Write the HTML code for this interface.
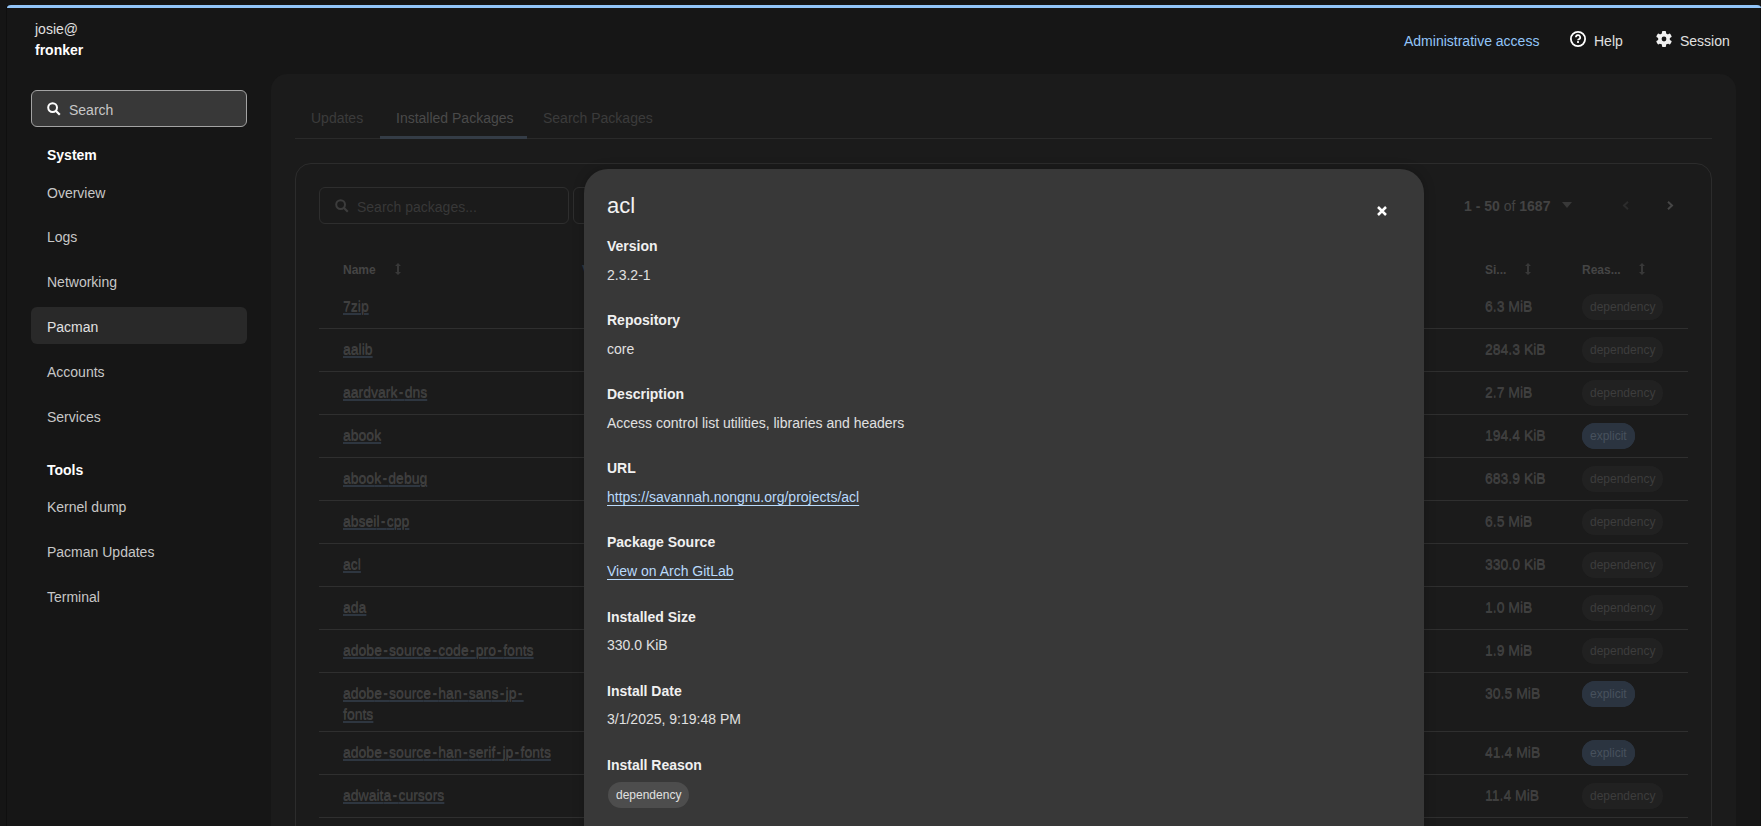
<!DOCTYPE html>
<html><head><meta charset="utf-8">
<style>
*{box-sizing:border-box;margin:0;padding:0}
html,body{width:1761px;height:826px;overflow:hidden;background:#151515}
body{font-family:"Liberation Sans",sans-serif;font-size:14px;color:#e0e0e0;position:relative}
.a{position:absolute;white-space:nowrap;line-height:1}
#frame{position:absolute;left:6px;top:5px;right:0;bottom:0;background:#161616;border-left:1px solid #0f0f0f;border-right:1px solid #101010;border-top-left-radius:4px;border-top-right-radius:4px;overflow:hidden}
#topline{position:absolute;left:7px;top:5px;right:0;height:3px;background:#92c5f9;border-top-left-radius:4px 3px;border-top-right-radius:4px 3px}
.nav{color:#c7c7c7}
.navh{color:#fff;font-weight:bold}
#content{position:absolute;left:271px;top:74px;width:1465px;height:780px;background:#1b1b1b;border-top-left-radius:16px;border-top-right-radius:16px}
.tab{color:#3b3b3b}
#card{position:absolute;left:295px;top:163px;width:1417px;height:700px;border:1px solid #2c2c2c;border-radius:16px}
.inp{position:absolute;border:1px solid #2e2e2e;border-radius:6px}
.th{color:#454545;font-weight:bold;font-size:12px}
.nm{color:#3f3f3f;text-decoration:underline;text-decoration-color:#2e3640;text-underline-offset:2px;text-decoration-thickness:1px}
.sep{position:absolute;left:319px;width:1369px;height:1px;background:#2f2f2f}
.sz{color:#3f3f3f}
.chip{position:absolute;left:1582px;height:26px;border-radius:13px;background:#212121;color:#3d3d3d;font-size:12px;line-height:26px;padding:0 8px;white-space:nowrap}
.chip.ex{background:#2b3440;color:#47515d}
#modal{position:absolute;left:584px;top:169px;width:840px;height:720px;background:#383838;border-radius:24px;box-shadow:0 0 12px rgba(0,0,0,.22)}
.ml{color:#f0f0f0;font-weight:bold}
.mv{color:#e0e0e0}
.ma{color:#b9dafc;text-decoration:underline;text-underline-offset:3px;text-decoration-thickness:1px}
svg{position:absolute;overflow:visible}
</style></head><body>
<div id="frame"></div>
<div id="topline"></div>

<!-- header -->
<div class="a" style="left:35px;top:22px;color:#e0e0e0">josie@</div>
<div class="a" style="left:35px;top:43px;color:#fff;font-weight:bold">fronker</div>
<div class="a" style="left:1404px;top:34px;color:#92c5f9">Administrative access</div>
<svg style="left:1570px;top:31px" width="16" height="16" viewBox="0 0 16 16"><circle cx="8" cy="8" r="7.1" fill="none" stroke="#fff" stroke-width="1.8"/><path d="M5.9 6.3a2.15 2.15 0 1 1 3 1.9c-.55.3-.9.5-.9 1.1" fill="none" stroke="#fff" stroke-width="1.7"/><rect x="7.05" y="10.1" width="1.9" height="1.8" fill="#fff"/></svg>
<div class="a" style="left:1594px;top:34px;color:#e0e0e0">Help</div>
<svg style="left:1656px;top:31px" width="16" height="16" viewBox="-8 -8 16 16"><g fill="#f0f0f0"><circle r="5.9"/><rect x="-2.05" y="-8" width="4.1" height="16" rx="0.9"/><rect x="-2.05" y="-8" width="4.1" height="16" rx="0.9" transform="rotate(60)"/><rect x="-2.05" y="-8" width="4.1" height="16" rx="0.9" transform="rotate(120)"/></g><circle r="2.4" fill="#161616"/></svg>
<div class="a" style="left:1680px;top:34px;color:#e0e0e0">Session</div>

<!-- sidebar search -->
<div style="position:absolute;left:31px;top:90px;width:216px;height:37px;border:1px solid #a3a3a3;border-radius:6px;background:#383838"></div>
<svg style="left:47px;top:102px" width="14" height="14" viewBox="0 0 14 14"><circle cx="5.6" cy="5.6" r="4.4" fill="none" stroke="#fff" stroke-width="2"/><path d="M8.8 8.8l4 4" stroke="#fff" stroke-width="2.2"/></svg>
<div class="a" style="left:69px;top:103px;color:#c7c7c7">Search</div>

<div class="a navh" style="left:47px;top:148px">System</div>
<div class="a nav" style="left:47px;top:186px">Overview</div>
<div class="a nav" style="left:47px;top:230px">Logs</div>
<div class="a nav" style="left:47px;top:275px">Networking</div>
<div style="position:absolute;left:31px;top:307px;width:216px;height:37px;border-radius:6px;background:#292929"></div>
<div class="a nav" style="left:47px;top:320px;color:#e0e0e0">Pacman</div>
<div class="a nav" style="left:47px;top:365px">Accounts</div>
<div class="a nav" style="left:47px;top:410px">Services</div>
<div class="a navh" style="left:47px;top:463px">Tools</div>
<div class="a nav" style="left:47px;top:500px">Kernel dump</div>
<div class="a nav" style="left:47px;top:545px">Pacman Updates</div>
<div class="a nav" style="left:47px;top:590px">Terminal</div>

<!-- content -->
<div id="content"></div>
<div class="a tab" style="left:311px;top:111px">Updates</div>
<div class="a tab" style="left:396px;top:111px;color:#4a4a4a">Installed Packages</div>
<div class="a tab" style="left:543px;top:111px">Search Packages</div>
<div style="position:absolute;left:295px;top:138px;width:1417px;height:1px;background:#2a2a2a"></div>
<div style="position:absolute;left:380px;top:136px;width:147px;height:3px;background:#343c46"></div>

<div id="card"></div>
<div class="inp" style="left:319px;top:187px;width:250px;height:37px"></div>
<div class="inp" style="left:573px;top:187px;width:150px;height:37px"></div>
<svg style="left:335px;top:199px" width="14" height="14" viewBox="0 0 14 14"><circle cx="5.6" cy="5.6" r="4.4" fill="none" stroke="#3c3c3c" stroke-width="2"/><path d="M8.8 8.8l4 4" stroke="#3c3c3c" stroke-width="2.2"/></svg>
<div class="a" style="left:357px;top:200px;color:#383838">Search packages...</div>

<div class="a" style="left:1464px;top:199px;color:#434343"><b>1 - 50</b> of <b>1687</b></div>
<svg style="left:1562px;top:202px" width="10" height="6" viewBox="0 0 10 6"><path d="M0 0h10L5 6z" fill="#383838"/></svg>
<svg style="left:1622px;top:201px" width="7" height="9" viewBox="0 0 7 9"><path d="M6 .8L2 4.5 6 8.2" fill="none" stroke="#2c2c2c" stroke-width="2"/></svg>
<svg style="left:1667px;top:201px" width="7" height="9" viewBox="0 0 7 9"><path d="M1 .8l4 3.7-4 3.7" fill="none" stroke="#464646" stroke-width="2"/></svg>

<div class="a th" style="left:343px;top:264px">Name</div>
<div class="a th" style="left:1485px;top:264px">Si...</div>
<div class="a th" style="left:1582px;top:264px">Reas...</div>
<svg style="left:395px;top:263px" width="6" height="12" viewBox="0 0 6 12"><path d="M3 0L6 3H4v6h2l-3 3-3-3h2V3H0z" fill="#383838"/></svg>
<svg style="left:1525px;top:263px" width="6" height="12" viewBox="0 0 6 12"><path d="M3 0L6 3H4v6h2l-3 3-3-3h2V3H0z" fill="#383838"/></svg>
<svg style="left:1639px;top:263px" width="6" height="12" viewBox="0 0 6 12"><path d="M3 0L6 3H4v6h2l-3 3-3-3h2V3H0z" fill="#383838"/></svg>

<div id="rows"></div>
<div class="a nm" style="left:343px;top:299px">7zip</div>
<div class="a sz" style="left:1485px;top:299px">6.3 MiB</div>
<div class="chip" style="top:294px">dependency</div>
<div class="sep" style="top:328px"></div>
<div class="a nm" style="left:343px;top:342px">aalib</div>
<div class="a sz" style="left:1485px;top:342px">284.3 KiB</div>
<div class="chip" style="top:337px">dependency</div>
<div class="sep" style="top:371px"></div>
<div class="a nm" style="left:343px;top:385px">aardvar<span style="letter-spacing:1.25px">k-</span>dns</div>
<div class="a sz" style="left:1485px;top:385px">2.7 MiB</div>
<div class="chip" style="top:380px">dependency</div>
<div class="sep" style="top:414px"></div>
<div class="a nm" style="left:343px;top:428px">abook</div>
<div class="a sz" style="left:1485px;top:428px">194.4 KiB</div>
<div class="chip ex" style="top:423px">explicit</div>
<div class="sep" style="top:457px"></div>
<div class="a nm" style="left:343px;top:471px">aboo<span style="letter-spacing:1.25px">k-</span>debug</div>
<div class="a sz" style="left:1485px;top:471px">683.9 KiB</div>
<div class="chip" style="top:466px">dependency</div>
<div class="sep" style="top:500px"></div>
<div class="a nm" style="left:343px;top:514px">absei<span style="letter-spacing:1.25px">l-</span>cpp</div>
<div class="a sz" style="left:1485px;top:514px">6.5 MiB</div>
<div class="chip" style="top:509px">dependency</div>
<div class="sep" style="top:543px"></div>
<div class="a nm" style="left:343px;top:557px">acl</div>
<div class="a sz" style="left:1485px;top:557px">330.0 KiB</div>
<div class="chip" style="top:552px">dependency</div>
<div class="sep" style="top:586px"></div>
<div class="a nm" style="left:343px;top:600px">ada</div>
<div class="a sz" style="left:1485px;top:600px">1.0 MiB</div>
<div class="chip" style="top:595px">dependency</div>
<div class="sep" style="top:629px"></div>
<div class="a nm" style="left:343px;top:643px">adob<span style="letter-spacing:1.25px">e-</span>sourc<span style="letter-spacing:1.25px">e-</span>cod<span style="letter-spacing:1.25px">e-</span>pr<span style="letter-spacing:1.25px">o-</span>fonts</div>
<div class="a sz" style="left:1485px;top:643px">1.9 MiB</div>
<div class="chip" style="top:638px">dependency</div>
<div class="sep" style="top:672px"></div>
<div class="a nm" style="left:343px;top:686px">adob<span style="letter-spacing:1.25px">e-</span>sourc<span style="letter-spacing:1.25px">e-</span>ha<span style="letter-spacing:1.25px">n-</span>san<span style="letter-spacing:1.25px">s-</span>j<span style="letter-spacing:1.25px">p-</span></div>
<div class="a nm" style="left:343px;top:707px">fonts</div>
<div class="a sz" style="left:1485px;top:686px">30.5 MiB</div>
<div class="chip ex" style="top:681px">explicit</div>
<div class="sep" style="top:731px"></div>
<div class="a nm" style="left:343px;top:745px">adob<span style="letter-spacing:1.25px">e-</span>sourc<span style="letter-spacing:1.25px">e-</span>ha<span style="letter-spacing:1.25px">n-</span>seri<span style="letter-spacing:1.25px">f-</span>j<span style="letter-spacing:1.25px">p-</span>fonts</div>
<div class="a sz" style="left:1485px;top:745px">41.4 MiB</div>
<div class="chip ex" style="top:740px">explicit</div>
<div class="sep" style="top:774px"></div>
<div class="a nm" style="left:343px;top:788px">adwait<span style="letter-spacing:1.25px">a-</span>cursors</div>
<div class="a sz" style="left:1485px;top:788px">11.4 MiB</div>
<div class="chip" style="top:783px">dependency</div>
<div class="sep" style="top:817px"></div>
<div class="a nm" style="left:343px;top:300px">7zip</div>
<div class="a sz" style="left:1485px;top:300px">6.3 MiB</div>
<div class="chip" style="top:294px">dependency</div>
<div class="sep" style="top:328px"></div>
<div class="a nm" style="left:343px;top:343px">aalib</div>
<div class="a sz" style="left:1485px;top:343px">284.3 KiB</div>
<div class="chip" style="top:337px">dependency</div>
<div class="sep" style="top:371px"></div>
<div class="a nm" style="left:343px;top:386px">aardvar<span style="letter-spacing:1.25px">k-</span>dns</div>
<div class="a sz" style="left:1485px;top:386px">2.7 MiB</div>
<div class="chip" style="top:380px">dependency</div>
<div class="sep" style="top:414px"></div>
<div class="a nm" style="left:343px;top:429px">abook</div>
<div class="a sz" style="left:1485px;top:429px">194.4 KiB</div>
<div class="chip ex" style="top:423px">explicit</div>
<div class="sep" style="top:457px"></div>
<div class="a nm" style="left:343px;top:472px">aboo<span style="letter-spacing:1.25px">k-</span>debug</div>
<div class="a sz" style="left:1485px;top:472px">683.9 KiB</div>
<div class="chip" style="top:466px">dependency</div>
<div class="sep" style="top:500px"></div>
<div class="a nm" style="left:343px;top:515px">absei<span style="letter-spacing:1.25px">l-</span>cpp</div>
<div class="a sz" style="left:1485px;top:515px">6.5 MiB</div>
<div class="chip" style="top:509px">dependency</div>
<div class="sep" style="top:543px"></div>
<div class="a nm" style="left:343px;top:558px">acl</div>
<div class="a sz" style="left:1485px;top:558px">330.0 KiB</div>
<div class="chip" style="top:552px">dependency</div>
<div class="sep" style="top:586px"></div>
<div class="a nm" style="left:343px;top:601px">ada</div>
<div class="a sz" style="left:1485px;top:601px">1.0 MiB</div>
<div class="chip" style="top:595px">dependency</div>
<div class="sep" style="top:629px"></div>
<div class="a nm" style="left:343px;top:644px">adob<span style="letter-spacing:1.25px">e-</span>sourc<span style="letter-spacing:1.25px">e-</span>cod<span style="letter-spacing:1.25px">e-</span>pr<span style="letter-spacing:1.25px">o-</span>fonts</div>
<div class="a sz" style="left:1485px;top:644px">1.9 MiB</div>
<div class="chip" style="top:638px">dependency</div>
<div class="sep" style="top:672px"></div>
<div class="a nm" style="left:343px;top:687px">adob<span style="letter-spacing:1.25px">e-</span>sourc<span style="letter-spacing:1.25px">e-</span>ha<span style="letter-spacing:1.25px">n-</span>san<span style="letter-spacing:1.25px">s-</span>j<span style="letter-spacing:1.25px">p-</span></div>
<div class="a nm" style="left:343px;top:708px">fonts</div>
<div class="a sz" style="left:1485px;top:687px">30.5 MiB</div>
<div class="chip ex" style="top:681px">explicit</div>
<div class="sep" style="top:731px"></div>
<div class="a nm" style="left:343px;top:746px">adob<span style="letter-spacing:1.25px">e-</span>sourc<span style="letter-spacing:1.25px">e-</span>ha<span style="letter-spacing:1.25px">n-</span>seri<span style="letter-spacing:1.25px">f-</span>j<span style="letter-spacing:1.25px">p-</span>fonts</div>
<div class="a sz" style="left:1485px;top:746px">41.4 MiB</div>
<div class="chip ex" style="top:740px">explicit</div>
<div class="sep" style="top:774px"></div>
<div class="a nm" style="left:343px;top:789px">adwait<span style="letter-spacing:1.25px">a-</span>cursors</div>
<div class="a sz" style="left:1485px;top:789px">11.4 MiB</div>
<div class="chip" style="top:783px">dependency</div>
<div class="sep" style="top:817px"></div>

<div class="a th" style="left:582px;top:264px;color:#2f3a46">Version</div>
<div id="modal"></div>
<div class="a" style="left:607px;top:195px;font-size:22px;color:#f2f2f2">acl</div>
<svg style="left:1377px;top:206px" width="10" height="10" viewBox="0 0 10 10"><path d="M1 1l8 8M9 1L1 9" stroke="#fff" stroke-width="2.5"/></svg>

<div class="a ml" style="left:607px;top:239px">Version</div>
<div class="a mv" style="left:607px;top:268px">2.3.2-1</div>
<div class="a ml" style="left:607px;top:313px">Repository</div>
<div class="a mv" style="left:607px;top:342px">core</div>
<div class="a ml" style="left:607px;top:387px">Description</div>
<div class="a mv" style="left:607px;top:416px">Access control list utilities, libraries and headers</div>
<div class="a ml" style="left:607px;top:461px">URL</div>
<div class="a ma" style="left:607px;top:490px">https://savannah.nongnu.org/projects/acl</div>
<div class="a ml" style="left:607px;top:535px">Package Source</div>
<div class="a ma" style="left:607px;top:564px">View on Arch GitLab</div>
<div class="a ml" style="left:607px;top:610px">Installed Size</div>
<div class="a mv" style="left:607px;top:638px">330.0 KiB</div>
<div class="a ml" style="left:607px;top:684px">Install Date</div>
<div class="a mv" style="left:607px;top:712px">3/1/2025, 9:19:48 PM</div>
<div class="a ml" style="left:607px;top:758px">Install Reason</div>
<div style="position:absolute;left:608px;top:782px;height:26px;border-radius:13px;background:#4d4d4d;color:#e0e0e0;font-size:12px;line-height:26px;padding:0 8px;white-space:nowrap">dependency</div>
</body></html>
